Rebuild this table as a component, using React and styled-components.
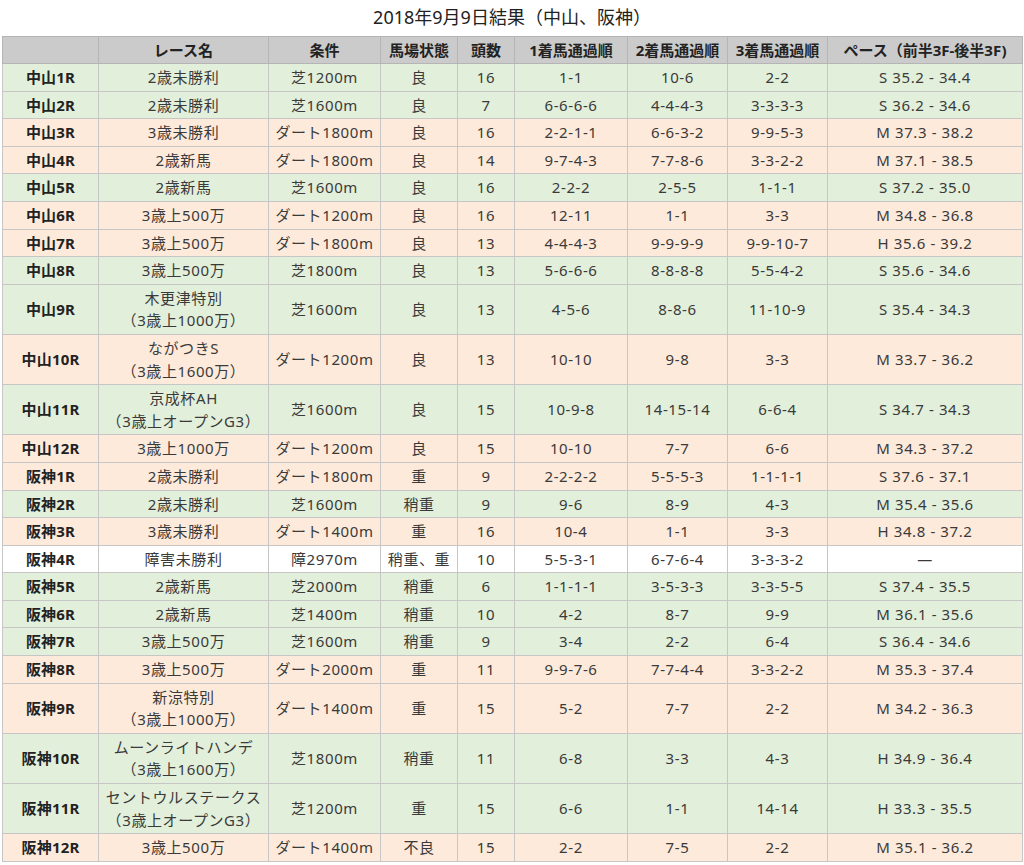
import React from "react";
import styled, { createGlobalStyle } from "styled-components";

const Global = createGlobalStyle`
  html, body { margin: 0; padding: 0; background: #fff; }
  body { font-family: "Noto Sans", "Noto Sans CJK JP", sans-serif; color: #333; }
`;

const Page = styled.div`
  width: 1024px;
  padding: 0 2px;
  box-sizing: border-box;
`;

const Title = styled.h1`
  margin: 0;
  height: 36px;
  line-height: 34px;
  text-align: center;
  font-size: 18px;
  font-weight: 400;
  color: #222;
`;

const Table = styled.table`
  width: 1020px;
  table-layout: fixed;
  border-collapse: collapse;
  font-size: 15px;
`;

const bg = { green: "#e2efda", orange: "#fdeadb", white: "#ffffff" };

const Row = styled.tr`
  background: ${(p) => bg[p.$tone]};
`;

const HeadRow = styled.tr`
  background: #cbcbcb;
`;

const Th = styled.th`
  border: 1px solid #b5b5b5;
  padding: 2px 2px;
  line-height: 22px;
  font-weight: 700;
  color: #222;
  text-align: center;
  white-space: nowrap;
`;

const Td = styled.td`
  border: 1px solid #c6c6c6;
  padding: 2px 2px;
  line-height: 22.6px;
  text-align: center;
  white-space: nowrap;
  letter-spacing: ${(p) => (p.$bold ? "0.2px" : "0.6px")};
  font-weight: ${(p) => (p.$bold ? 700 : 400)};
  color: ${(p) => (p.$bold ? "#222" : "#3a3a3a")};
`;

const widths = [96, 170, 112, 77, 57, 113, 100, 100, 195];
const heads = ["", "レース名", "条件", "馬場状態", "頭数", "1着馬通過順", "2着馬通過順", "3着馬通過順", "ペース（前半3F-後半3F)"];

const rows = [
  ["中山1R", ["2歳未勝利"], "芝1200m", "良", "16", "1-1", "10-6", "2-2", "S 35.2 - 34.4", "green"],
  ["中山2R", ["2歳未勝利"], "芝1600m", "良", "7", "6-6-6-6", "4-4-4-3", "3-3-3-3", "S 36.2 - 34.6", "green"],
  ["中山3R", ["3歳未勝利"], "ダート1800m", "良", "16", "2-2-1-1", "6-6-3-2", "9-9-5-3", "M 37.3 - 38.2", "orange"],
  ["中山4R", ["2歳新馬"], "ダート1800m", "良", "14", "9-7-4-3", "7-7-8-6", "3-3-2-2", "M 37.1 - 38.5", "orange"],
  ["中山5R", ["2歳新馬"], "芝1600m", "良", "16", "2-2-2", "2-5-5", "1-1-1", "S 37.2 - 35.0", "green"],
  ["中山6R", ["3歳上500万"], "ダート1200m", "良", "16", "12-11", "1-1", "3-3", "M 34.8 - 36.8", "orange"],
  ["中山7R", ["3歳上500万"], "ダート1800m", "良", "13", "4-4-4-3", "9-9-9-9", "9-9-10-7", "H 35.6 - 39.2", "orange"],
  ["中山8R", ["3歳上500万"], "芝1800m", "良", "13", "5-6-6-6", "8-8-8-8", "5-5-4-2", "S 35.6 - 34.6", "green"],
  ["中山9R", ["木更津特別", "（3歳上1000万）"], "芝1600m", "良", "13", "4-5-6", "8-8-6", "11-10-9", "S 35.4 - 34.3", "green"],
  ["中山10R", ["ながつきS", "（3歳上1600万）"], "ダート1200m", "良", "13", "10-10", "9-8", "3-3", "M 33.7 - 36.2", "orange"],
  ["中山11R", ["京成杯AH", "（3歳上オープンG3）"], "芝1600m", "良", "15", "10-9-8", "14-15-14", "6-6-4", "S 34.7 - 34.3", "green"],
  ["中山12R", ["3歳上1000万"], "ダート1200m", "良", "15", "10-10", "7-7", "6-6", "M 34.3 - 37.2", "orange"],
  ["阪神1R", ["2歳未勝利"], "ダート1800m", "重", "9", "2-2-2-2", "5-5-5-3", "1-1-1-1", "S 37.6 - 37.1", "orange"],
  ["阪神2R", ["2歳未勝利"], "芝1600m", "稍重", "9", "9-6", "8-9", "4-3", "M 35.4 - 35.6", "green"],
  ["阪神3R", ["3歳未勝利"], "ダート1400m", "重", "16", "10-4", "1-1", "3-3", "H 34.8 - 37.2", "orange"],
  ["阪神4R", ["障害未勝利"], "障2970m", "稍重、重", "10", "5-5-3-1", "6-7-6-4", "3-3-3-2", "―", "white"],
  ["阪神5R", ["2歳新馬"], "芝2000m", "稍重", "6", "1-1-1-1", "3-5-3-3", "3-3-5-5", "S 37.4 - 35.5", "green"],
  ["阪神6R", ["2歳新馬"], "芝1400m", "稍重", "10", "4-2", "8-7", "9-9", "M 36.1 - 35.6", "green"],
  ["阪神7R", ["3歳上500万"], "芝1600m", "稍重", "9", "3-4", "2-2", "6-4", "S 36.4 - 34.6", "green"],
  ["阪神8R", ["3歳上500万"], "ダート2000m", "重", "11", "9-9-7-6", "7-7-4-4", "3-3-2-2", "M 35.3 - 37.4", "orange"],
  ["阪神9R", ["新涼特別", "（3歳上1000万）"], "ダート1400m", "重", "15", "5-2", "7-7", "2-2", "M 34.2 - 36.3", "orange"],
  ["阪神10R", ["ムーンライトハンデ", "（3歳上1600万）"], "芝1800m", "稍重", "11", "6-8", "3-3", "4-3", "H 34.9 - 36.4", "green"],
  ["阪神11R", ["セントウルステークス", "（3歳上オープンG3）"], "芝1200m", "重", "15", "6-6", "1-1", "14-14", "H 33.3 - 35.5", "green"],
  ["阪神12R", ["3歳上500万"], "ダート1400m", "不良", "15", "2-2", "7-5", "2-2", "M 35.1 - 36.2", "orange"],
];

export default function App() {
  return (
    <>
      <Global />
      <Page>
        <Title>2018年9月9日結果（中山、阪神）</Title>
        <Table>
          <colgroup>
            {widths.map((w, i) => (
              <col key={i} style={{ width: w }} />
            ))}
          </colgroup>
          <thead>
            <HeadRow>
              {heads.map((h, i) => (
                <Th key={i}>{h}</Th>
              ))}
            </HeadRow>
          </thead>
          <tbody>
            {rows.map((r) => (
              <Row key={r[0]} $tone={r[9]}>
                <Td $bold>{r[0]}</Td>
                <Td>
                  {r[1].map((l, i) => (
                    <React.Fragment key={i}>
                      {i > 0 && <br />}
                      {l}
                    </React.Fragment>
                  ))}
                </Td>
                {r.slice(2, 9).map((c, i) => (
                  <Td key={i}>{c}</Td>
                ))}
              </Row>
            ))}
          </tbody>
        </Table>
      </Page>
    </>
  );
}
